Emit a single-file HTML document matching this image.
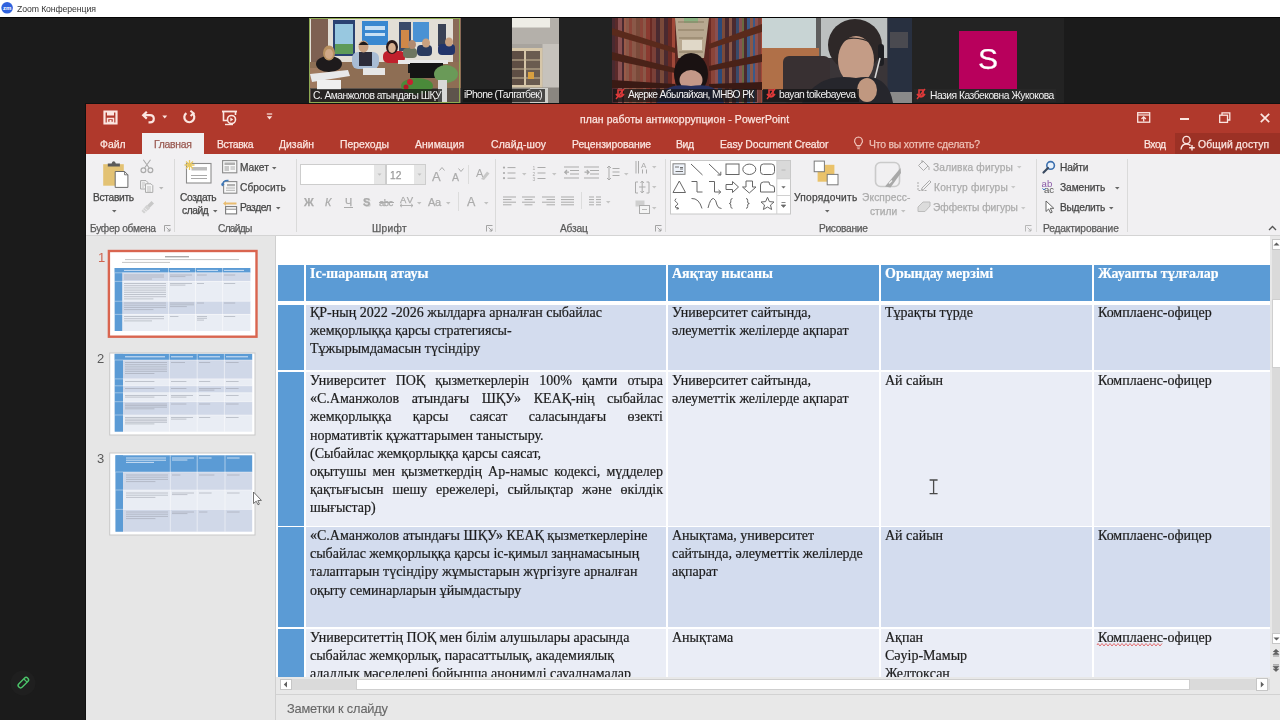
<!DOCTYPE html>
<html><head><meta charset="utf-8">
<style>
*{margin:0;padding:0;box-sizing:border-box}
body{-webkit-font-smoothing:antialiased}
html,body{width:1280px;height:720px;overflow:hidden;background:#1b1b1b;font-family:"Liberation Sans",sans-serif;position:relative}
.a{position:absolute}
svg.a{overflow:visible}
.t{position:absolute;white-space:nowrap;line-height:1;-webkit-text-stroke:0.25px currentColor;will-change:transform}
.c{position:absolute;font-family:"Liberation Serif",serif;font-size:14px;line-height:18.2px;color:#1c1c1c;white-space:nowrap;-webkit-text-stroke:0.2px currentColor;will-change:transform}
.hd{color:#fff;font-weight:bold}
.j{display:block;width:353px;text-align:justify;text-align-last:justify;white-space:normal}
</style></head><body>
<div class="a" style="left:0px;top:0px;width:1280px;height:16.5px;background:#ffffff;"></div>
<div class="a" style="left:0px;top:16.5px;width:1280px;height:1.5px;background:#050505;"></div>
<svg class="a" style="left:1px;top:2px;" width="13" height="13" viewBox="0 0 13 13"><circle cx="6.1" cy="5.8" r="5.8" fill="#2f62de"/><text x="6.1" y="7.9" font-size="6" fill="#fff" text-anchor="middle" font-family="Liberation Sans" font-weight="bold">zm</text></svg>
<div class="t" style="left:16.8px;top:5.24px;font-size:8.7px;color:#333;letter-spacing:-0.093px;-webkit-text-stroke:0;">Zoom Конференция</div>
<svg class="a" style="left:309.5px;top:18px;" width="151" height="85" viewBox="0 0 151 85">
    <rect x="0" y="0" width="151" height="85" fill="#d2ccc2"/>
    <rect x="0" y="0" width="151" height="44" fill="#e2ded6"/>
    <rect x="1" y="0" width="17" height="50" fill="#7e6052"/>
    <rect x="143" y="0" width="8" height="44" fill="#8a6a58"/>
    <rect x="23" y="2" width="22" height="36" fill="#2a4272"/>
    <rect x="25" y="6" width="18" height="20" fill="#98c8e0"/>
    <rect x="25" y="26" width="18" height="10" fill="#5e9a58"/>
    <rect x="52" y="3" width="26" height="24" fill="#3a88d0"/>
    <rect x="55" y="8" width="20" height="4" fill="#c8e0f4"/>
    <rect x="55" y="15" width="20" height="3" fill="#c8e0f4"/>
    <rect x="89" y="4" width="12" height="29" fill="#3a4a6a"/>
    <rect x="91" y="12" width="8" height="18" fill="#d08848"/>
    <rect x="103" y="4" width="16" height="20" fill="#4a92d4"/>
    <rect x="128" y="6" width="8" height="22" fill="#3a4256"/>
    <rect x="0" y="44" width="151" height="28" fill="#8e6e54"/>
    <rect x="0" y="50" width="30" height="22" fill="#a07a60"/>
    <rect x="0" y="70" width="151" height="15" fill="#5e544c"/>
    <ellipse cx="19" cy="46" rx="13" ry="8" fill="#1e1a1c"/>
    <ellipse cx="19" cy="35" rx="6" ry="7.5" fill="#b89060"/>
    <ellipse cx="19" cy="36" rx="4" ry="5" fill="#d0a888"/>
    <rect x="42" y="34" width="27" height="17" rx="6" fill="#a8bcd4"/>
    <rect x="49" y="34" width="13" height="14" fill="#2c2c3a"/>
    <ellipse cx="53.5" cy="28.5" rx="5" ry="6" fill="#c8a080"/>
    <path d="M48.5 27 Q53.5 20 58.5 27 Z" fill="#1e1a1a"/>
    <rect x="73" y="33" width="22" height="12" rx="5" fill="#c0202c"/>
    <ellipse cx="82" cy="29" rx="6" ry="7" fill="#2a1a1a"/>
    <ellipse cx="82" cy="30" rx="3.8" ry="5" fill="#d8b090"/>
    <rect x="93" y="30" width="14" height="10" rx="4" fill="#6e7660"/>
    <ellipse cx="102" cy="26.5" rx="4" ry="4.5" fill="#b08a70"/>
    <rect x="107" y="27" width="15" height="11" rx="4" fill="#2a3a5e"/>
    <ellipse cx="116" cy="25" rx="4" ry="4.5" fill="#c8a080"/>
    <rect x="128" y="26" width="17" height="11" rx="4" fill="#22346a"/>
    <ellipse cx="139" cy="24" rx="4" ry="4.5" fill="#c8a080"/>
    <path d="M0 56 L38 52 L40 58 L2 64 Z" fill="#e8e8ea"/>
    <rect x="7" y="62" width="24" height="10" fill="#f0f0f0"/>
    <rect x="53" y="50" width="22" height="7" fill="#e6e6e6"/>
    <rect x="88" y="42" width="50" height="4" fill="#e8e8e8"/>
    <rect x="98" y="46" width="10" height="9" fill="#1a1a1a"/>
    <rect x="100" y="45" width="33" height="15" fill="#141414"/>
    <ellipse cx="107" cy="68" rx="16" ry="8" fill="#4a8a3a"/>
    <circle cx="100" cy="64" r="3" fill="#c82030"/>
    <circle cx="96" cy="69" r="2.5" fill="#b01828"/>
    <ellipse cx="136" cy="56" rx="12" ry="9" fill="#6a9a58"/>
    <rect x="128" y="62" width="9" height="23" fill="#d8d8d8"/>
    </svg>
<div class="a" style="left:309px;top:17.8px;width:151px;height:85px;background:transparent;border:1.3px solid #8eaa52;"></div>
<div class="a" style="left:311px;top:88.5px;width:131px;height:13.5px;background:rgba(20,20,20,0.72);"></div>
<div class="t" style="left:312.5px;top:90.58px;font-size:10.3px;color:#f2f2f2;letter-spacing:-0.569px;-webkit-text-stroke:0;">С. Аманжолов атындағы ШҚУ</div>
<div class="a" style="left:461px;top:18px;width:151px;height:85px;background:#222222;"></div>
<svg class="a" style="left:512px;top:18px;" width="47" height="85" viewBox="0 0 47 85">
    <rect x="0" y="0" width="47" height="85" fill="#a8a49e"/>
    <rect x="0" y="0" width="47" height="26" fill="#b4b0aa"/>
    <rect x="0" y="0" width="38" height="9.5" fill="#eeede6"/>
    <rect x="30.5" y="26" width="16.5" height="59" fill="#c6c2bc"/>
    <rect x="0" y="30" width="30.5" height="40" fill="#d6c6a8"/>
    <rect x="0" y="33" width="12" height="34" fill="#5e4e44"/>
    <rect x="14" y="33" width="14" height="34" fill="#6a5c50"/>
    <path d="M0 42 H28 M0 51 H28 M0 60 H28" stroke="#c8b898" stroke-width="1"/>
    <rect x="16" y="54" width="6" height="7" fill="#d8a040"/>
    <rect x="0" y="69.5" width="47" height="15.5" fill="#8a8680"/>
    <rect x="18" y="70" width="18" height="15" fill="#d0d0cc"/>
    </svg>
<div class="a" style="left:462.5px;top:88.5px;width:82.5px;height:13.5px;background:rgba(20,20,20,0.72);"></div>
<div class="t" style="left:463.8px;top:90.48px;font-size:10.3px;color:#f2f2f2;letter-spacing:-0.614px;-webkit-text-stroke:0;">iPhone (Талгатбек)</div>
<svg class="a" style="left:612px;top:18px;" width="150" height="85" viewBox="0 0 150 85">
    <rect x="0" y="0" width="150" height="85" fill="#5a2620"/>
    <rect x="0" y="0" width="3" height="85" fill="#4a2a30"/><rect x="3" y="0" width="3" height="85" fill="#5a2a2a"/><rect x="6" y="0" width="4" height="85" fill="#8a5050"/><rect x="10" y="0" width="2" height="85" fill="#4a2a30"/><rect x="12" y="0" width="2" height="85" fill="#9a5a48"/><rect x="14" y="0" width="3" height="85" fill="#8a5848"/><rect x="17" y="0" width="3" height="85" fill="#8a4438"/><rect x="20" y="0" width="4" height="85" fill="#8a5848"/><rect x="24" y="0" width="4" height="85" fill="#7a4a3a"/><rect x="28" y="0" width="3" height="85" fill="#8a4438"/><rect x="31" y="0" width="3" height="85" fill="#8a5848"/><rect x="34" y="0" width="4" height="85" fill="#8a3a30"/><rect x="38" y="0" width="2" height="85" fill="#6a2a24"/><rect x="40" y="0" width="2" height="85" fill="#7a4038"/><rect x="42" y="0" width="2" height="85" fill="#7a4038"/><rect x="44" y="0" width="4" height="85" fill="#4a2a30"/><rect x="48" y="0" width="4" height="85" fill="#7a4a3a"/><rect x="52" y="0" width="4" height="85" fill="#4a2a30"/><rect x="56" y="0" width="4" height="85" fill="#6a2a24"/><rect x="60" y="0" width="3" height="85" fill="#a04838"/><rect x="97" y="0" width="2" height="85" fill="#6a2a24"/><rect x="99" y="0" width="4" height="85" fill="#8a4438"/><rect x="103" y="0" width="3" height="85" fill="#8a5050"/><rect x="106" y="0" width="4" height="85" fill="#2a4a7a"/><rect x="110" y="0" width="3" height="85" fill="#7a4a3a"/><rect x="113" y="0" width="4" height="85" fill="#4a2a30"/><rect x="117" y="0" width="3" height="85" fill="#8a5848"/><rect x="120" y="0" width="4" height="85" fill="#4a2a30"/><rect x="124" y="0" width="3" height="85" fill="#3a4a6a"/><rect x="127" y="0" width="3" height="85" fill="#8a5050"/><rect x="130" y="0" width="2" height="85" fill="#6a6a40"/><rect x="132" y="0" width="3" height="85" fill="#4a2a30"/><rect x="135" y="0" width="3" height="85" fill="#3a5a8a"/><rect x="138" y="0" width="3" height="85" fill="#8a5848"/><rect x="141" y="0" width="2" height="85" fill="#3a5a8a"/><rect x="143" y="0" width="3" height="85" fill="#8a5050"/><rect x="146" y="0" width="3" height="85" fill="#7a4038"/><rect x="149" y="0" width="2" height="85" fill="#a04838"/>
    <polygon points="63,0 97,0 92,40 66,40" fill="#b8a890"/>
    <rect x="72" y="0" width="14" height="5" fill="#8ab080"/>
    <rect x="70" y="22" width="20" height="10" fill="#e0d8c8"/>
    <path d="M66 4 L92 4 M66 12 L92 12 M67 20 H91 M67 34 H91" stroke="#8a7a60" stroke-width="1"/>
    <polygon points="0,10 63,30 63,35 0,17" fill="#5a2a1c"/>
    <polygon points="0,34 63,50 63,55 0,42" fill="#4a2218"/>
    <polygon points="0,62 63,66 63,70 0,70" fill="#3a1a14"/>
    <polygon points="150,6 97,26 97,31 150,14" fill="#5a2a1c"/>
    <polygon points="150,36 97,48 97,53 150,44" fill="#4a2218"/>
    <polygon points="150,64 97,66 97,70 150,72" fill="#3a1a14"/>
    <ellipse cx="79" cy="56" rx="17" ry="21" fill="#1a1212"/>
    <ellipse cx="79" cy="62" rx="11.5" ry="10" fill="#c49888"/>
    <path d="M45 85 Q50 64 79 68 Q108 64 112 85 Z" fill="#27305e"/>
    </svg>
<div class="a" style="left:612.5px;top:88.5px;width:144.5px;height:13.5px;background:rgba(20,20,20,0.72);"></div>
<svg class="a" style="left:615px;top:89px;" width="10" height="11" viewBox="0 0 10 11"><path d="M3 1 L7 1 L7 7 L3 7 Z M1 5 Q5 11 9 5" fill="none" stroke="#e03a3a" stroke-width="1.6"/><path d="M1 10 L9 0" stroke="#e03a3a" stroke-width="1.4"/></svg>
<div class="t" style="left:628px;top:90.48px;font-size:10.3px;color:#f2f2f2;letter-spacing:-0.657px;-webkit-text-stroke:0;">Ақерке Абылайхан, МНВО РК</div>
<svg class="a" style="left:762px;top:18px;" width="150" height="85" viewBox="0 0 150 85">
    <rect x="0" y="0" width="150" height="85" fill="#3a3538"/>
    <rect x="0" y="0" width="54" height="30" fill="#c8d4d4"/>
    <rect x="54" y="0" width="5" height="40" fill="#5e5e5e"/>
    <rect x="59" y="0" width="66.5" height="40" fill="#bcc0c0"/>
    <rect x="125.5" y="0" width="24.5" height="85" fill="#283040"/>
    <rect x="128" y="14" width="18" height="16" fill="#4a4a50"/>
    <rect x="128" y="74" width="22" height="11" fill="#8a8a8a"/>
    <rect x="0" y="30" width="57" height="42" fill="#b07048"/>
    <rect x="21" y="38" width="47" height="47" rx="6" fill="#383032"/>
    <ellipse cx="93" cy="27" rx="27" ry="26" fill="#2e2828"/><rect x="116" y="26" width="6" height="22" rx="3" fill="#1e1e22"/><path d="M118 40 L113 60" stroke="#d8d8d8" stroke-width="1.5"/>
    <ellipse cx="94" cy="42" rx="18" ry="24" fill="#c49c86"/><path d="M76 30 Q84 14 112 26 Q100 18 84 20 Z" fill="#2e2828"/>
    <path d="M40 85 Q55 54 94 60 Q126 54 131 85 Z" fill="#26262c"/>
    <ellipse cx="105" cy="72" rx="10" ry="12" fill="#c09880"/>
    </svg>
<div class="a" style="left:762.5px;top:88.5px;width:96px;height:13.5px;background:rgba(20,20,20,0.72);"></div>
<svg class="a" style="left:766px;top:89px;" width="10" height="11" viewBox="0 0 10 11"><path d="M3 1 L7 1 L7 7 L3 7 Z M1 5 Q5 11 9 5" fill="none" stroke="#e03a3a" stroke-width="1.6"/><path d="M1 10 L9 0" stroke="#e03a3a" stroke-width="1.4"/></svg>
<div class="t" style="left:778.8px;top:90.48px;font-size:10.3px;color:#f2f2f2;letter-spacing:-0.556px;-webkit-text-stroke:0;">bayan toikebayeva</div>
<div class="a" style="left:912px;top:18px;width:152px;height:85px;background:#232323;"></div>
<div class="a" style="left:959px;top:31px;width:58px;height:58px;background:#b8005c;"></div>
<div class="t" style="left:959px;top:44px;width:58px;text-align:center;font-size:30px;color:#fff">S</div>
<div class="a" style="left:913.8px;top:89px;width:142.5px;height:13px;background:rgba(40,40,40,0.8);"></div>
<svg class="a" style="left:916px;top:89px;" width="10" height="11" viewBox="0 0 10 11"><path d="M3 1 L7 1 L7 7 L3 7 Z M1 5 Q5 11 9 5" fill="none" stroke="#e03a3a" stroke-width="1.6"/><path d="M1 10 L9 0" stroke="#e03a3a" stroke-width="1.4"/></svg>
<div class="t" style="left:929.5px;top:90.68px;font-size:10.3px;color:#f2f2f2;letter-spacing:-0.493px;-webkit-text-stroke:0;">Назия Казбековна Жукокова</div>
<div class="a" style="left:85px;top:103px;width:1195px;height:617px;background:#111;"></div>
<div class="a" style="left:86px;top:104px;width:1194px;height:616px;background:#e8e8e8;"></div>
<div class="a" style="left:86px;top:104px;width:1194px;height:50px;background:#b0392c;"></div>
<svg class="a" style="left:103px;top:110px;" width="15" height="15" viewBox="0 0 15 15"><path d="M1.5 1.5 H13.5 V13.5 H1.5 Z" fill="none" stroke="#fbe6e1" stroke-width="2.2"/><rect x="4" y="1" width="7" height="4.5" fill="#fbe6e1"/><rect x="4.5" y="8.5" width="6" height="4" fill="none" stroke="#fbe6e1" stroke-width="1.5"/><rect x="6.5" y="10" width="2" height="3" fill="#fbe6e1"/></svg>
<svg class="a" style="left:141px;top:110px;" width="15" height="15" viewBox="0 0 15 15"><path d="M3 5.2 H9 Q12.8 5.2 12.8 8.8 Q12.8 12.4 9 12.4 H7.5" fill="none" stroke="#fbe6e1" stroke-width="2.2"/><path d="M5.8 1.8 L2.2 5.2 L5.8 8.6" fill="none" stroke="#fbe6e1" stroke-width="2.2"/></svg>
<svg class="a" style="left:162px;top:115px;" width="6" height="4" viewBox="0 0 6 4"><path d="M0.3 0.5 L5.2 0.5 L2.75 3.4 Z" fill="#fbe6e1"/></svg>
<svg class="a" style="left:182px;top:110px;" width="15" height="15" viewBox="0 0 15 15"><path d="M10.2 3.2 A5 5 0 1 1 4.4 3.2" fill="none" stroke="#fbe6e1" stroke-width="2.2"/><path d="M8.4 0.8 L11.6 3.3 L8.6 6" fill="none" stroke="#fbe6e1" stroke-width="2"/></svg>
<svg class="a" style="left:221px;top:110px;" width="17" height="16" viewBox="0 0 17 16"><path d="M1 1.5 H16" stroke="#fbe6e1" stroke-width="1.8"/><path d="M2.5 2 V10.5 H6" fill="none" stroke="#fbe6e1" stroke-width="1.6"/><path d="M14.5 2 V5" stroke="#fbe6e1" stroke-width="1.6"/><circle cx="10.5" cy="9.5" r="4" fill="none" stroke="#fbe6e1" stroke-width="1.6"/><path d="M9.3 7.5 L12.3 9.5 L9.3 11.5 Z" fill="#fbe6e1"/><path d="M4 14.5 H12" stroke="#fbe6e1" stroke-width="1.4"/></svg>
<svg class="a" style="left:266px;top:113px;" width="7" height="8" viewBox="0 0 7 8"><path d="M0.8 1 H6.2" stroke="#fbe6e1" stroke-width="1.2"/><path d="M0.8 3.2 L6.2 3.2 L3.5 6.4 Z" fill="#fbe6e1"/></svg>
<div class="t" style="left:579.8px;top:115.20px;font-size:10.4px;color:#fbe6e1;letter-spacing:0.114px;">план работы антикоррупцион - PowerPoint</div>
<svg class="a" style="left:1137px;top:112px;" width="14" height="11" viewBox="0 0 14 11"><rect x="0.7" y="0.7" width="12" height="9.5" fill="none" stroke="#fbe6e1" stroke-width="1.3"/><path d="M0.7 3 H12.7" stroke="#fbe6e1" stroke-width="1.2"/><path d="M6.7 9.5 V5 M4.5 7 L6.7 4.8 L8.9 7" fill="none" stroke="#fbe6e1" stroke-width="1.3"/></svg>
<div class="a" style="left:1179.5px;top:118.3px;width:9px;height:1.6px;background:#fbe6e1;"></div>
<svg class="a" style="left:1219px;top:112px;" width="12" height="11" viewBox="0 0 12 11"><rect x="0.7" y="3.2" width="7.8" height="7.2" fill="none" stroke="#fbe6e1" stroke-width="1.3"/><path d="M3 3 V0.8 H10.8 V8 H8.6" fill="none" stroke="#fbe6e1" stroke-width="1.3"/></svg>
<svg class="a" style="left:1260px;top:113px;" width="10" height="10" viewBox="0 0 10 10"><path d="M0.8 0.8 L9.2 9.2 M9.2 0.8 L0.8 9.2" stroke="#fbe6e1" stroke-width="1.7"/></svg>
<div class="a" style="left:141.75px;top:133.4px;width:62.5px;height:21px;background:#f1f0f2;"></div>
<div class="t" style="left:99.6px;top:140.10px;font-size:10.4px;color:#fbe6e1;letter-spacing:0.010px;">Файл</div>
<div class="t" style="left:153.6px;top:140.10px;font-size:10.4px;color:#9a5a52;letter-spacing:-0.281px;">Главная</div>
<div class="t" style="left:217.3px;top:140.10px;font-size:10.4px;color:#fbe6e1;letter-spacing:-0.343px;">Вставка</div>
<div class="t" style="left:279.3px;top:140.10px;font-size:10.4px;color:#fbe6e1;letter-spacing:0.008px;">Дизайн</div>
<div class="t" style="left:340.3px;top:140.10px;font-size:10.4px;color:#fbe6e1;letter-spacing:0.031px;">Переходы</div>
<div class="t" style="left:415px;top:140.10px;font-size:10.4px;color:#fbe6e1;letter-spacing:0.054px;">Анимация</div>
<div class="t" style="left:490.5px;top:140.10px;font-size:10.4px;color:#fbe6e1;letter-spacing:0.136px;">Слайд-шоу</div>
<div class="t" style="left:571.5px;top:140.10px;font-size:10.4px;color:#fbe6e1;letter-spacing:-0.085px;">Рецензирование</div>
<div class="t" style="left:676.3px;top:140.10px;font-size:10.4px;color:#fbe6e1;letter-spacing:-0.408px;">Вид</div>
<div class="t" style="left:719.5px;top:140.10px;font-size:10.4px;color:#fbe6e1;letter-spacing:-0.124px;">Easy Document Creator</div>
<svg class="a" style="left:853px;top:136px;" width="11" height="14" viewBox="0 0 11 14"><path d="M5.5 1 A4 4 0 0 1 8.3 7.8 L7.5 9.5 H3.5 L2.7 7.8 A4 4 0 0 1 5.5 1 Z" fill="none" stroke="#efc2b8" stroke-width="1.2"/><path d="M3.8 11 H7.2 M4.3 12.8 H6.7" stroke="#efc2b8" stroke-width="1.1"/></svg>
<div class="t" style="left:868.8px;top:140.10px;font-size:10.4px;color:#edc0b6;letter-spacing:-0.180px;">Что вы хотите сделать?</div>
<div class="t" style="left:1143.8px;top:140.10px;font-size:10.4px;color:#fbe6e1;letter-spacing:-0.443px;">Вход</div>
<div class="a" style="left:1175px;top:133.4px;width:105px;height:20.6px;background:#9c3125;"></div>
<svg class="a" style="left:1180px;top:135px;" width="15" height="16" viewBox="0 0 15 16"><circle cx="6.5" cy="5" r="3.6" fill="none" stroke="#fbe6e1" stroke-width="1.4"/><path d="M1 14.5 Q1.5 9 6.5 9 Q9 9 10.5 10.5" fill="none" stroke="#fbe6e1" stroke-width="1.4"/><path d="M12 10 V15.5 M9.2 12.8 H14.8" stroke="#fbe6e1" stroke-width="1.4"/></svg>
<div class="t" style="left:1197.5px;top:140.10px;font-size:10.4px;color:#fbe6e1;letter-spacing:0.130px;">Общий доступ</div>
<div class="a" style="left:86px;top:154px;width:1194px;height:82px;background:#f1f0f2;"></div>
<div class="a" style="left:86px;top:235px;width:1194px;height:1px;background:#d4d4d4;"></div>
<div class="a" style="left:173.5px;top:159px;width:1px;height:73px;background:#dadada;"></div>
<div class="a" style="left:295.5px;top:159px;width:1px;height:73px;background:#dadada;"></div>
<div class="a" style="left:495.3px;top:159px;width:1px;height:73px;background:#dadada;"></div>
<div class="a" style="left:665.2px;top:159px;width:1px;height:73px;background:#dadada;"></div>
<div class="a" style="left:1035.6px;top:159px;width:1px;height:73px;background:#dadada;"></div>
<div class="a" style="left:1126.7px;top:159px;width:1px;height:73px;background:#dadada;"></div>
<svg class="a" style="left:102px;top:160px;" width="28" height="29" viewBox="0 0 28 29"><rect x="1.2" y="4.2" width="20.6" height="21.5" fill="#e3c274"/>
      <path d="M5.8 6.5 V3.6 H9.6 Q10.2 1.2 11.7 1.2 Q13.2 1.2 13.8 3.6 H17.9 V6.5 Z" fill="#5a5a5a"/>
      <path d="M13.2 11.5 H22.6 L25.9 14.8 V27.4 H13.2 Z" fill="#fff" stroke="#6a6a6a" stroke-width="1"/>
      <path d="M22.6 11.5 V14.8 H25.9" fill="none" stroke="#6a6a6a" stroke-width="0.9"/></svg>
<div class="t" style="left:93.2px;top:192.67px;font-size:10.2px;color:#454545;letter-spacing:-0.305px;">Вставить</div>
<svg class="a" style="left:112px;top:210px;" width="5" height="3" viewBox="0 0 5 3"><path d="M0 0 H4.5 L2.25 2.6 Z" fill="#666"/></svg>
<svg class="a" style="left:140px;top:159px;" width="14" height="15" viewBox="0 0 14 15"><circle cx="3.4" cy="11.2" r="2.4" fill="none" stroke="#ababab" stroke-width="1.2"/><circle cx="10.4" cy="11.2" r="2.4" fill="none" stroke="#ababab" stroke-width="1.2"/><path d="M4.6 9 L10.5 0.8 M9.2 9 L3.3 0.8" stroke="#ababab" stroke-width="1.1"/></svg>
<svg class="a" style="left:140px;top:180px;" width="14" height="13" viewBox="0 0 14 13"><path d="M0.6 0.6 H6 L7.8 2.4 V9 H0.6 Z" fill="#f3f3f3" stroke="#ababab" stroke-width="1"/><path d="M5.5 3.8 H11 L12.8 5.6 V12.4 H5.5 Z" fill="#f5f5f5" stroke="#ababab" stroke-width="1"/><path d="M2 3 H5 M2 5 H5 M2 7 H4 M7 7 H11 M7 9 H11 M7 11 H11" stroke="#ababab" stroke-width="0.7"/></svg>
<svg class="a" style="left:159px;top:187px;" width="5" height="3" viewBox="0 0 5 3"><path d="M0 0 H4.5 L2.25 2.6 Z" fill="#b8b8b8"/></svg>
<svg class="a" style="left:140px;top:200px;" width="15" height="14" viewBox="0 0 15 14"><path d="M7 5.5 L11.5 1 L14 3.5 L9.5 8 Z" fill="#c8c8c8"/><path d="M1.5 11 L6.5 5 L10 8.5 L4 13.5 Z" fill="#d2d2d2"/><path d="M3 9.5 L6 12 M4.5 8 L7.5 10.5" stroke="#f1f0f2" stroke-width="0.8"/></svg>
<div class="t" style="left:89.9px;top:223.77px;font-size:10.2px;color:#5a5a5a;letter-spacing:-0.292px;">Буфер обмена</div>
<svg class="a" style="left:164px;top:225px;" width="7" height="7" viewBox="0 0 7 7"><path d="M0.5 6.5 V0.5 H6.5" fill="none" stroke="#9a9a9a" stroke-width="0.9"/><path d="M2.5 2.5 L6 6 M6 3.5 V6 H3.5" fill="none" stroke="#9a9a9a" stroke-width="0.9"/></svg>
<svg class="a" style="left:183px;top:159px;" width="30" height="26" viewBox="0 0 30 26"><rect x="3.5" y="4.5" width="24.5" height="19.5" fill="#fff" stroke="#8c8c8c" stroke-width="1.1"/>
      <rect x="8.5" y="8" width="15.5" height="3.5" fill="#bdbdbd"/>
      <path d="M8 16.5 H24 M8 19.5 H24" stroke="#a0a0a0" stroke-width="0.9"/>
      <g stroke="#e8c860" stroke-width="1.3"><path d="M6.5 1 V11 M1.5 6 H11.5 M3 2.5 L10 9.5 M10 2.5 L3 9.5"/></g></svg>
<div class="t" style="left:180px;top:193.17px;font-size:10.2px;color:#454545;letter-spacing:-0.344px;">Создать</div>
<div class="t" style="left:182.2px;top:206.27px;font-size:10.2px;color:#454545;letter-spacing:-0.419px;">слайд</div>
<svg class="a" style="left:212.8px;top:210px;" width="5" height="3" viewBox="0 0 5 3"><path d="M0 0 H4.5 L2.25 2.6 Z" fill="#666"/></svg>
<svg class="a" style="left:222px;top:160px;" width="16" height="14" viewBox="0 0 16 14"><rect x="0.6" y="0.6" width="14.2" height="12.2" fill="#f8f8f8" stroke="#8a8a8a" stroke-width="1.1"/><rect x="2.5" y="2.5" width="10.5" height="2.5" fill="#b0b0b0"/><rect x="2.5" y="6" width="4.5" height="5" fill="#c8c8c8"/><path d="M8.5 7 H13 M8.5 9 H13" stroke="#9a9a9a" stroke-width="0.8"/></svg>
<div class="t" style="left:239.8px;top:163.17px;font-size:10.2px;color:#454545;letter-spacing:0.008px;">Макет</div>
<svg class="a" style="left:272.2px;top:166.5px;" width="5" height="3" viewBox="0 0 5 3"><path d="M0 0 H4.5 L2.25 2.6 Z" fill="#666"/></svg>
<svg class="a" style="left:221px;top:179px;" width="17" height="15" viewBox="0 0 17 15"><rect x="2.6" y="2.6" width="13.2" height="11.6" fill="#f8f8f8" stroke="#8a8a8a" stroke-width="1.1"/><rect x="6" y="5" width="8" height="2.2" fill="#b0b0b0"/><path d="M5 9 H14 M5 11.3 H14" stroke="#a0a0a0" stroke-width="0.8"/><path d="M1.2 6.5 Q2 1 7.5 1.6" fill="none" stroke="#3f78b8" stroke-width="1.6"/><path d="M0 4.5 L1.3 7.5 L3.6 5" fill="#3f78b8"/></svg>
<div class="t" style="left:239.8px;top:183.17px;font-size:10.2px;color:#454545;letter-spacing:0.066px;">Сбросить</div>
<svg class="a" style="left:223px;top:200px;" width="15" height="15" viewBox="0 0 15 15"><path d="M2 3.5 H13.5" stroke="#e8bc70" stroke-width="2"/><path d="M0 3.5 L3 1 V6 Z" fill="#e8bc70"/><rect x="2.6" y="6.6" width="11" height="7.3" fill="#fff" stroke="#7a7a7a" stroke-width="1.1"/><path d="M2.6 9.2 H13.6" stroke="#7a7a7a" stroke-width="0.9"/></svg>
<div class="t" style="left:239.8px;top:203.17px;font-size:10.2px;color:#454545;letter-spacing:-0.443px;">Раздел</div>
<svg class="a" style="left:275.5px;top:207px;" width="5" height="3" viewBox="0 0 5 3"><path d="M0 0 H4.5 L2.25 2.6 Z" fill="#666"/></svg>
<div class="t" style="left:217.8px;top:223.77px;font-size:10.2px;color:#5a5a5a;letter-spacing:-0.714px;">Слайды</div>
<svg class="a" style="left:300px;top:164px;" width="126" height="21" viewBox="0 0 126 21"><rect x="0.5" y="0.5" width="85" height="20" fill="#fff" stroke="#cdcdcd"/><rect x="74" y="1" width="11" height="19" fill="#e6e6e6"/><path d="M77.5 9.5 H81.5 L79.5 11.8 Z" fill="#c0c0c0"/><rect x="86.5" y="0.5" width="39" height="20" fill="#fff" stroke="#cdcdcd"/><rect x="114" y="1" width="11" height="19" fill="#e6e6e6"/><path d="M117.5 9.5 H121.5 L119.5 11.8 Z" fill="#c0c0c0"/></svg>
<div class="t" style="left:389.5px;top:170.67px;font-size:10.2px;color:#9a9a9a;">12</div>
<div class="t" style="left:431.5px;top:169.50px;font-size:13px;color:#ababab;">A</div>
<svg class="a" style="left:439px;top:167px;" width="6" height="4" viewBox="0 0 6 4"><path d="M0.5 3.5 L3 0.5 L5.5 3.5" fill="none" stroke="#ababab" stroke-width="1"/></svg>
<div class="t" style="left:451.5px;top:171.61px;font-size:10.5px;color:#ababab;">A</div>
<svg class="a" style="left:457.5px;top:168px;" width="6" height="4" viewBox="0 0 6 4"><path d="M0.5 0.5 L3 3.5 L5.5 0.5" fill="none" stroke="#ababab" stroke-width="1"/></svg>
<div class="a" style="left:468.4px;top:165px;width:1px;height:19px;background:#dcdcdc;"></div>
<svg class="a" style="left:476px;top:167px;" width="14" height="14" viewBox="0 0 14 14"><text x="0" y="10" font-size="11" fill="#ababab" font-family="Liberation Sans">A</text><path d="M5 12 L11 4.5 L13.5 6.5 L8 13 Z" fill="#c8c8c8"/></svg>
<div class="t" style="left:304px;top:196.86px;font-size:10.8px;color:#ababab;font-weight:bold;">Ж</div>
<div class="t" style="left:324.6px;top:196.86px;font-size:10.8px;color:#ababab;font-style:italic;">К</div>
<div class="t" style="left:344.5px;top:196.86px;font-size:10.8px;color:#ababab;">Ч</div>
<div class="a" style="left:344px;top:206.8px;width:8.5px;height:1px;background:#ababab;"></div>
<div class="t" style="left:363px;top:196.89px;font-size:11px;color:#ababab;font-weight:bold;text-shadow:1px 1px 0 #d8d8d8;">S</div>
<div class="t" style="left:379px;top:197.66px;font-size:9.5px;color:#ababab;letter-spacing:-0.559px;">abc</div>
<div class="a" style="left:379px;top:201.5px;width:14.5px;height:0.9px;background:#ababab;"></div>
<div class="t" style="left:399.5px;top:195.26px;font-size:9.5px;color:#ababab;letter-spacing:1.031px;">AV</div>
<svg class="a" style="left:399px;top:203px;" width="15" height="5" viewBox="0 0 15 5"><path d="M1 2.5 H14 M1 2.5 L3 0.8 M1 2.5 L3 4.2 M14 2.5 L12 0.8 M14 2.5 L12 4.2" fill="none" stroke="#ababab" stroke-width="0.9"/></svg>
<svg class="a" style="left:417px;top:201.5px;" width="5" height="3" viewBox="0 0 5 3"><path d="M0 0 H4.5 L2.25 2.6 Z" fill="#c0c0c0"/></svg>
<div class="t" style="left:428px;top:196.69px;font-size:11px;color:#ababab;letter-spacing:-0.455px;">Aa</div>
<svg class="a" style="left:446px;top:201.5px;" width="5" height="3" viewBox="0 0 5 3"><path d="M0 0 H4.5 L2.25 2.6 Z" fill="#c0c0c0"/></svg>
<div class="a" style="left:458px;top:192px;width:1px;height:19px;background:#dcdcdc;"></div>
<div class="t" style="left:467.2px;top:195.72px;font-size:12.5px;color:#ababab;">A</div>
<svg class="a" style="left:484px;top:201.5px;" width="5" height="3" viewBox="0 0 5 3"><path d="M0 0 H4.5 L2.25 2.6 Z" fill="#c0c0c0"/></svg>
<div class="t" style="left:372px;top:223.77px;font-size:10.2px;color:#5a5a5a;letter-spacing:0.260px;">Шрифт</div>
<svg class="a" style="left:486px;top:225px;" width="7" height="7" viewBox="0 0 7 7"><path d="M0.5 6.5 V0.5 H6.5" fill="none" stroke="#9a9a9a" stroke-width="0.9"/><path d="M2.5 2.5 L6 6 M6 3.5 V6 H3.5" fill="none" stroke="#9a9a9a" stroke-width="0.9"/></svg>
<svg class="a" style="left:502px;top:165px;" width="15" height="16" viewBox="0 0 15 16"><g fill="#ababab"><circle cx="2" cy="2.6" r="1.1"/><circle cx="2" cy="8" r="1.1"/><circle cx="2" cy="13.2" r="1.1"/></g><path d="M5.5 2.6 H13.5 M5.5 8 H13.5 M5.5 13.2 H13.5" stroke="#ababab" stroke-width="1"/></svg>
<svg class="a" style="left:521.8px;top:172.5px;" width="5" height="3" viewBox="0 0 5 3"><path d="M0 0 H4.5 L2.25 2.6 Z" fill="#c4c4c4"/></svg>
<svg class="a" style="left:532px;top:164px;" width="15" height="17" viewBox="0 0 15 17"><text x="0.5" y="6" font-size="5" fill="#ababab" font-family="Liberation Sans">1</text><text x="0.5" y="11.5" font-size="5" fill="#ababab" font-family="Liberation Sans">2</text><text x="0.5" y="17" font-size="5" fill="#ababab" font-family="Liberation Sans">3</text><path d="M5.5 3.5 H13.5 M5.5 9 H13.5 M5.5 14.5 H13.5" stroke="#ababab" stroke-width="1"/></svg>
<svg class="a" style="left:552px;top:172.5px;" width="5" height="3" viewBox="0 0 5 3"><path d="M0 0 H4.5 L2.25 2.6 Z" fill="#c4c4c4"/></svg>
<svg class="a" style="left:564px;top:166px;" width="16" height="14" viewBox="0 0 16 14"><path d="M0 1 H15 M6 4.5 H15 M6 8 H15 M0 12 H15" stroke="#ababab" stroke-width="1"/><path d="M5 6.2 H0.8 M3 4 L0.8 6.2 L3 8.4" fill="none" stroke="#ababab" stroke-width="1.3"/></svg>
<svg class="a" style="left:583.5px;top:166px;" width="16" height="14" viewBox="0 0 16 14"><path d="M0 1 H15 M6 4.5 H15 M6 8 H15 M0 12 H15" stroke="#ababab" stroke-width="1"/><path d="M0.5 6.2 H4.8 M2.8 4 L5 6.2 L2.8 8.4" fill="none" stroke="#ababab" stroke-width="1.3"/></svg>
<svg class="a" style="left:606px;top:165px;" width="14" height="16" viewBox="0 0 14 16"><path d="M3 1 V15 M1 3 L3 1 L5 3 M1 13 L3 15 L5 13" fill="none" stroke="#ababab" stroke-width="1"/><path d="M6.5 3.5 H13.5 M6.5 7 H13.5 M6.5 10.5 H13.5" stroke="#ababab" stroke-width="1"/></svg>
<svg class="a" style="left:623.8px;top:172.5px;" width="5" height="3" viewBox="0 0 5 3"><path d="M0 0 H4.5 L2.25 2.6 Z" fill="#c4c4c4"/></svg>
<svg class="a" style="left:634.5px;top:159.5px;" width="15" height="15" viewBox="0 0 15 15"><path d="M1 1 V13.5 M3.5 1 V13.5" stroke="#ababab" stroke-width="1"/><text x="6" y="8" font-size="8" fill="#ababab" font-family="Liberation Sans">A</text><path d="M7.5 9.5 V13.5 M11.5 9.5 V13.5" stroke="#ababab" stroke-width="1"/></svg>
<svg class="a" style="left:652.3px;top:166px;" width="5" height="3" viewBox="0 0 5 3"><path d="M0 0 H4.5 L2.25 2.6 Z" fill="#c4c4c4"/></svg>
<svg class="a" style="left:634.5px;top:180px;" width="15" height="14" viewBox="0 0 15 14"><path d="M0.5 2 V13 M14 2 V13 M0.5 2 H3 M0.5 13 H3 M14 2 H11.5 M14 13 H11.5" fill="none" stroke="#ababab" stroke-width="1"/><path d="M7.2 1 V13 M5.5 3 L7.2 1 L9 3 M5.5 11 L7.2 13 L9 11" fill="none" stroke="#ababab" stroke-width="1"/><path d="M4 7 H10.5" stroke="#ababab" stroke-width="1"/></svg>
<svg class="a" style="left:652.3px;top:186px;" width="5" height="3" viewBox="0 0 5 3"><path d="M0 0 H4.5 L2.25 2.6 Z" fill="#c4c4c4"/></svg>
<svg class="a" style="left:634.5px;top:200px;" width="15" height="14" viewBox="0 0 15 14"><rect x="0.5" y="0.5" width="9" height="6" fill="#cfcfcf"/><rect x="4.5" y="5.5" width="10" height="8" fill="#f4f4f4" stroke="#ababab" stroke-width="1"/><path d="M7 9.5 H12" stroke="#ababab" stroke-width="0.8"/></svg>
<svg class="a" style="left:652.3px;top:207px;" width="5" height="3" viewBox="0 0 5 3"><path d="M0 0 H4.5 L2.25 2.6 Z" fill="#c4c4c4"/></svg>
<svg class="a" style="left:503.4px;top:196px;" width="14" height="10" viewBox="0 0 14 10"><path d="M0 1.0 H13 M0 3.6 H8.5 M0 6.2 H13 M0 8.8 H8.5 " stroke="#ababab" stroke-width="1"/></svg>
<svg class="a" style="left:522.4px;top:196px;" width="14" height="10" viewBox="0 0 14 10"><path d="M0 1.0 H13 M2.5 3.6 H10.5 M0 6.2 H13 M2.5 8.8 H10.5 " stroke="#ababab" stroke-width="1"/></svg>
<svg class="a" style="left:542px;top:196px;" width="14" height="10" viewBox="0 0 14 10"><path d="M0 1.0 H13 M4.5 3.6 H13 M0 6.2 H13 M4.5 8.8 H13 " stroke="#ababab" stroke-width="1"/></svg>
<svg class="a" style="left:561px;top:196px;" width="14" height="10" viewBox="0 0 14 10"><path d="M0 1.0 H13 M0 3.6 H13 M0 6.2 H13 M0 8.8 H13 " stroke="#ababab" stroke-width="1"/></svg>
<div class="a" style="left:581px;top:192px;width:1px;height:17px;background:#dcdcdc;"></div>
<svg class="a" style="left:588.5px;top:196px;" width="12" height="10" viewBox="0 0 12 10"><path d="M0 1 H5 M7 1 H12 M0 3.6 H5 M7 3.6 H12 M0 6.2 H5 M7 6.2 H12 M0 8.8 H5 M7 8.8 H12" stroke="#ababab" stroke-width="1"/></svg>
<svg class="a" style="left:605.5px;top:200.5px;" width="5" height="3" viewBox="0 0 5 3"><path d="M0 0 H4.5 L2.25 2.6 Z" fill="#c4c4c4"/></svg>
<div class="t" style="left:560px;top:223.77px;font-size:10.2px;color:#5a5a5a;letter-spacing:-0.203px;">Абзац</div>
<svg class="a" style="left:655.3px;top:225px;" width="7" height="7" viewBox="0 0 7 7"><path d="M0.5 6.5 V0.5 H6.5" fill="none" stroke="#9a9a9a" stroke-width="0.9"/><path d="M2.5 2.5 L6 6 M6 3.5 V6 H3.5" fill="none" stroke="#9a9a9a" stroke-width="0.9"/></svg>
<svg class="a" style="left:670px;top:160px;" width="122" height="56" viewBox="0 0 122 56"><rect x="0.5" y="0.5" width="120" height="53.5" fill="#fff" stroke="#c8c8c8"/>
    <rect x="107" y="1" width="13" height="18" fill="#d9d9d9"/>
    <path d="M107 18.8 H120.5 M107 35.5 H120.5 M106.8 1 V54" stroke="#d0d0d0" stroke-width="1"/>
    <path d="M111.5 10 H115.5" stroke="#b8b8b8" stroke-width="1"/>
    <path d="M111.3 26.2 H115.7 L113.5 28.6 Z" fill="#6a6a6a"/>
    <path d="M111.5 42.5 H115.5 M111.3 45 H115.7 L113.5 47.4 Z" stroke="#6a6a6a" fill="#6a6a6a" stroke-width="0.8"/>
    <g fill="none" stroke="#666" stroke-width="1"><rect x="3" y="3.8" width="12" height="10.5" fill="#eef3fa" stroke="#808080"/><path d="M5 7 H9 M5.5 11.5 H13 M10 7.5 H13 M10 9 H13" stroke="#707070"/><path d="M21 4 L32.5 15"/><path d="M39 4 L50.5 15 M47.5 15 H50.8 V11.7"/><rect x="56" y="4" width="13" height="10.5"/><ellipse cx="79.3" cy="9.3" rx="6.5" ry="5.2"/><rect x="90.5" y="4" width="14" height="10.5" rx="3"/><path d="M3 32.5 L9.3 21 L15.5 32.5 Z"/><path d="M21.5 21.5 H27 V32 H32.5"/><path d="M39 21.5 H44.5 V32 H50.5 M48.5 30 L50.8 32 L48.5 34"/><path d="M56 24.5 H62.5 V21.5 L68.5 27 L62.5 32.5 V29.5 H56 Z"/><path d="M76 21 H82.5 V27 H86 L79.3 33 L72.5 27 H76 Z"/><path d="M90.5 32 V25 Q90.5 22 93.5 22 H99 Q99 25.5 101.5 25.5 Q104.5 25.5 104.5 28 V32 Z"/><path d="M6 38.5 Q3.5 40.5 6.5 42.5 Q9.5 44 5.5 46 Q4 47.5 8.5 48.5 M7.5 47 L8.5 48.8 L6.5 49"/><path d="M21.5 38.5 Q29 38 32 48.5"/><path d="M38 48 Q40.5 38 43.5 38.5 Q46 39.5 47 45 Q48 48.5 51.5 48.5"/><path d="M62.5 38.5 Q60.8 38.5 60.8 40.3 V42 Q60.8 43.5 59.2 43.5 Q60.8 43.5 60.8 45 V46.6 Q60.8 48.3 62.5 48.3"/><path d="M76 38.5 Q77.7 38.5 77.7 40.3 V42 Q77.7 43.5 79.3 43.5 Q77.7 43.5 77.7 45 V46.6 Q77.7 48.3 76 48.3"/><path d="M97.5 37.3 L99.4 41.6 L104 42 L100.5 45 L101.6 49.5 L97.5 47 L93.4 49.5 L94.5 45 L91 42 L95.6 41.6 Z"/></g></svg>
<svg class="a" style="left:813px;top:160px;" width="27" height="27" viewBox="0 0 27 27"><rect x="4.6" y="4.8" width="16.8" height="16.9" fill="#eac26a"/><rect x="1.2" y="1.1" width="10.2" height="10.6" fill="#fff" stroke="#7a7a7a" stroke-width="1"/><rect x="14.2" y="14.4" width="10.8" height="10.4" fill="#fff" stroke="#7a7a7a" stroke-width="1"/></svg>
<div class="t" style="left:794.4px;top:192.87px;font-size:10.2px;color:#454545;letter-spacing:0.270px;">Упорядочить</div>
<svg class="a" style="left:825.3px;top:210.3px;" width="5" height="3" viewBox="0 0 5 3"><path d="M0 0 H4.5 L2.25 2.6 Z" fill="#666"/></svg>
<svg class="a" style="left:874px;top:161px;" width="28" height="28" viewBox="0 0 28 28"><rect x="1.5" y="1.5" width="24" height="24" rx="5" fill="none" stroke="#cacaca" stroke-width="1.6"/><path d="M26.5 7 L11 25.5 L16.5 26.5 L27 12 Z" fill="#a8a8a8"/><path d="M18 19.5 L15 22.5" stroke="#f1f1f1" stroke-width="1.2"/></svg>
<div class="t" style="left:862.2px;top:192.87px;font-size:10.2px;color:#ababab;letter-spacing:0.116px;">Экспресс-</div>
<div class="t" style="left:870px;top:207.07px;font-size:10.2px;color:#ababab;letter-spacing:0.020px;">стили</div>
<svg class="a" style="left:901px;top:210.3px;" width="5" height="3" viewBox="0 0 5 3"><path d="M0 0 H4.5 L2.25 2.6 Z" fill="#c0c0c0"/></svg>
<svg class="a" style="left:917px;top:159px;" width="14" height="13" viewBox="0 0 14 13"><path d="M1.5 6.5 L6 2 L11 7 L6.5 11.5 Z" fill="none" stroke="#ababab" stroke-width="1"/><path d="M5 1 V4 M10 6 Q13 8 12 11" fill="none" stroke="#ababab" stroke-width="1"/></svg>
<div class="t" style="left:933.3px;top:163.17px;font-size:10.2px;color:#ababab;letter-spacing:0.162px;">Заливка фигуры</div>
<svg class="a" style="left:1016.7px;top:166px;" width="5" height="3" viewBox="0 0 5 3"><path d="M0 0 H4.5 L2.25 2.6 Z" fill="#c8c8c8"/></svg>
<svg class="a" style="left:916.5px;top:179px;" width="15" height="13" viewBox="0 0 15 13"><path d="M1 3 V11.5 H10" fill="none" stroke="#ababab" stroke-width="1" stroke-dasharray="2 1"/><path d="M5 9 L12.5 1.5 L14 3 L6.5 10.5 L4.5 11 Z" fill="none" stroke="#ababab" stroke-width="1"/></svg>
<div class="t" style="left:933.9px;top:183.17px;font-size:10.2px;color:#ababab;letter-spacing:0.215px;">Контур фигуры</div>
<svg class="a" style="left:1011px;top:186px;" width="5" height="3" viewBox="0 0 5 3"><path d="M0 0 H4.5 L2.25 2.6 Z" fill="#c8c8c8"/></svg>
<svg class="a" style="left:916.5px;top:201px;" width="14" height="12" viewBox="0 0 14 12"><path d="M1 6 L6 1 H13 V5 L8 10.5 H1 Z" fill="#dcdcdc" stroke="#bcbcbc" stroke-width="1"/></svg>
<div class="t" style="left:933.3px;top:202.67px;font-size:10.2px;color:#ababab;letter-spacing:-0.000px;">Эффекты фигуры</div>
<svg class="a" style="left:1021px;top:206.5px;" width="5" height="3" viewBox="0 0 5 3"><path d="M0 0 H4.5 L2.25 2.6 Z" fill="#c8c8c8"/></svg>
<div class="t" style="left:818.9px;top:223.77px;font-size:10.2px;color:#5a5a5a;letter-spacing:-0.309px;">Рисование</div>
<svg class="a" style="left:1025px;top:225px;" width="7" height="7" viewBox="0 0 7 7"><path d="M0.5 6.5 V0.5 H6.5" fill="none" stroke="#b0b0b0" stroke-width="0.9"/><path d="M2.5 2.5 L6 6 M6 3.5 V6 H3.5" fill="none" stroke="#b0b0b0" stroke-width="0.9"/></svg>
<svg class="a" style="left:1042px;top:160px;" width="14" height="14" viewBox="0 0 14 14"><circle cx="8.6" cy="5.4" r="3.8" fill="#eaf2fb" stroke="#3c6fae" stroke-width="1.6"/><path d="M6 8 L1.5 12.5" stroke="#3a4a60" stroke-width="2.2" stroke-linecap="round"/></svg>
<div class="t" style="left:1059.7px;top:163.17px;font-size:10.2px;color:#454545;letter-spacing:-0.127px;">Найти</div>
<svg class="a" style="left:1041px;top:179px;" width="17" height="15" viewBox="0 0 17 15"><text x="0.6" y="7.6" font-size="9.6" fill="#8a5aa8" font-family="Liberation Sans">ab</text><text x="3" y="13.8" font-size="9.6" fill="#555" font-family="Liberation Sans">ac</text><path d="M1.5 9.3 L3 11 L4.5 9.3" fill="none" stroke="#3a78c0" stroke-width="1"/></svg>
<div class="t" style="left:1059.7px;top:183.17px;font-size:10.2px;color:#454545;letter-spacing:-0.077px;">Заменить</div>
<svg class="a" style="left:1114.8px;top:186.6px;" width="5" height="3" viewBox="0 0 5 3"><path d="M0 0 H4.5 L2.25 2.6 Z" fill="#666"/></svg>
<svg class="a" style="left:1045px;top:200px;" width="10" height="14" viewBox="0 0 10 14"><path d="M1 1 V11.5 L3.6 9 L5.6 13 L7.2 12.2 L5.3 8.3 L8.8 8.3 Z" fill="#fff" stroke="#555" stroke-width="0.9"/></svg>
<div class="t" style="left:1059.7px;top:203.17px;font-size:10.2px;color:#454545;letter-spacing:-0.251px;">Выделить</div>
<svg class="a" style="left:1108.8px;top:206.6px;" width="5" height="3" viewBox="0 0 5 3"><path d="M0 0 H4.5 L2.25 2.6 Z" fill="#666"/></svg>
<div class="t" style="left:1043px;top:223.77px;font-size:10.2px;color:#5a5a5a;letter-spacing:-0.139px;">Редактирование</div>
<svg class="a" style="left:1268px;top:225px;" width="9" height="6" viewBox="0 0 9 6"><path d="M1 5 L4.5 1.5 L8 5" fill="none" stroke="#555" stroke-width="1.3"/></svg>
<div class="a" style="left:86px;top:236px;width:190px;height:484px;background:#e6e6e6;"></div>
<div class="a" style="left:275.3px;top:236px;width:1px;height:484px;background:#cfcfcf;"></div>
<div class="t" style="left:97.6px;top:251.10px;font-size:13px;color:#cf6450;-webkit-text-stroke:0;">1</div>
<div class="t" style="left:97.2px;top:351.90px;font-size:13px;color:#5a5a5a;-webkit-text-stroke:0;">2</div>
<div class="t" style="left:97.2px;top:451.90px;font-size:13px;color:#5a5a5a;-webkit-text-stroke:0;">3</div>
<svg class="a" style="left:0px;top:0px;" width="300" height="720" viewBox="0 0 300 720"><rect x="110" y="252" width="146" height="84" fill="#fff"/><path d="M165 256.8 H189" stroke="#777" stroke-width="0.9"/><path d="M125 259.6 H239 M122 262.4 H170" stroke="#aaa" stroke-width="0.7"/><rect x="114.7" y="268" width="135.7" height="4.8" fill="#5b9bd5"/><rect x="114.7" y="272.8" width="135.7" height="8.599999999999966" fill="#d0d8e8"/><rect x="114.7" y="281.4" width="135.7" height="19.850000000000023" fill="#e9edf4"/><rect x="114.7" y="301.25" width="135.7" height="13.149999999999977" fill="#d0d8e8"/><rect x="114.7" y="314.4" width="135.7" height="16.600000000000023" fill="#e9edf4"/><rect x="114.7" y="268" width="7.5" height="63" fill="#5b9bd5"/><path d="M168.5 268 V331" stroke="#fff" stroke-width="0.5"/><path d="M195.5 268 V331" stroke="#fff" stroke-width="0.5"/><path d="M222.6 268 V331" stroke="#fff" stroke-width="0.5"/><path d="M114.7 272.8 H250.4" stroke="#fff" stroke-width="0.4"/><path d="M114.7 281.4 H250.4" stroke="#fff" stroke-width="0.4"/><path d="M114.7 301.25 H250.4" stroke="#fff" stroke-width="0.4"/><path d="M114.7 314.4 H250.4" stroke="#fff" stroke-width="0.4"/><path d="M124 270.4 H160 M170 270.4 H190 M197 270.4 H218 M224 270.4 H244" stroke="#e8f0fa" stroke-width="0.8"/><path d="M124 275.00 H164.00" stroke="#9aa0aa" stroke-width="0.55"/><path d="M124 277.00 H164.00" stroke="#9aa0aa" stroke-width="0.55"/><path d="M124 279.00 H152.00" stroke="#9aa0aa" stroke-width="0.55"/><path d="M170 275.00 H192.00" stroke="#9aa0aa" stroke-width="0.55"/><path d="M170 276.60 H185.40" stroke="#9aa0aa" stroke-width="0.55"/><path d="M197 275.00 H206.80" stroke="#9aa0aa" stroke-width="0.55"/><path d="M224 275.00 H235.20" stroke="#9aa0aa" stroke-width="0.55"/><path d="M124 283.50 H166.00" stroke="#9aa0aa" stroke-width="0.55"/><path d="M124 285.70 H166.00" stroke="#9aa0aa" stroke-width="0.55"/><path d="M124 287.90 H166.00" stroke="#9aa0aa" stroke-width="0.55"/><path d="M124 290.10 H166.00" stroke="#9aa0aa" stroke-width="0.55"/><path d="M124 292.30 H166.00" stroke="#9aa0aa" stroke-width="0.55"/><path d="M124 294.50 H166.00" stroke="#9aa0aa" stroke-width="0.55"/><path d="M124 296.70 H166.00" stroke="#9aa0aa" stroke-width="0.55"/><path d="M124 298.90 H153.40" stroke="#9aa0aa" stroke-width="0.55"/><path d="M170 283.50 H192.00" stroke="#9aa0aa" stroke-width="0.55"/><path d="M170 285.10 H185.40" stroke="#9aa0aa" stroke-width="0.55"/><path d="M197 283.50 H204.00" stroke="#9aa0aa" stroke-width="0.55"/><path d="M224 283.50 H235.20" stroke="#9aa0aa" stroke-width="0.55"/><path d="M124 303.00 H166.00" stroke="#9aa0aa" stroke-width="0.55"/><path d="M124 305.20 H166.00" stroke="#9aa0aa" stroke-width="0.55"/><path d="M124 307.40 H166.00" stroke="#9aa0aa" stroke-width="0.55"/><path d="M124 309.60 H153.40" stroke="#9aa0aa" stroke-width="0.55"/><path d="M170 303.00 H194.00" stroke="#9aa0aa" stroke-width="0.55"/><path d="M170 304.80 H194.00" stroke="#9aa0aa" stroke-width="0.55"/><path d="M170 306.60 H186.80" stroke="#9aa0aa" stroke-width="0.55"/><path d="M197 303.00 H204.00" stroke="#9aa0aa" stroke-width="0.55"/><path d="M224 303.00 H235.20" stroke="#9aa0aa" stroke-width="0.55"/><path d="M124 316.50 H164.00" stroke="#9aa0aa" stroke-width="0.55"/><path d="M124 318.70 H164.00" stroke="#9aa0aa" stroke-width="0.55"/><path d="M124 320.90 H152.00" stroke="#9aa0aa" stroke-width="0.55"/><path d="M170 316.50 H178.40" stroke="#9aa0aa" stroke-width="0.55"/><path d="M197 316.50 H207.00" stroke="#9aa0aa" stroke-width="0.55"/><path d="M197 318.30 H207.00" stroke="#9aa0aa" stroke-width="0.55"/><path d="M197 320.10 H204.00" stroke="#9aa0aa" stroke-width="0.55"/><path d="M224 316.50 H235.20" stroke="#9aa0aa" stroke-width="0.55"/><rect x="108.9" y="251" width="147.6" height="85.7" fill="none" stroke="#d9654f" stroke-width="2.4"/></svg>
<svg class="a" style="left:0px;top:0px;" width="300" height="720" viewBox="0 0 300 720"><rect x="109.7" y="353" width="145.3" height="82" fill="#fff" stroke="#c8c8c8" stroke-width="1"/><rect x="114.7" y="353.9" width="137.5" height="6.1" fill="#5b9bd5"/><rect x="114.7" y="360" width="137.5" height="18.899999999999977" fill="#d0d8e8"/><rect x="114.7" y="378.9" width="137.5" height="6.900000000000034" fill="#e9edf4"/><rect x="114.7" y="385.8" width="137.5" height="7.0" fill="#d0d8e8"/><rect x="114.7" y="392.8" width="137.5" height="8.899999999999977" fill="#e9edf4"/><rect x="114.7" y="401.7" width="137.5" height="13.300000000000011" fill="#d0d8e8"/><rect x="114.7" y="415" width="137.5" height="16.69999999999999" fill="#e9edf4"/><rect x="114.7" y="353.9" width="8.3" height="77.80000000000001" fill="#5b9bd5"/><path d="M169.4 353.9 V431.7" stroke="#fff" stroke-width="0.5"/><path d="M197.2 353.9 V431.7" stroke="#fff" stroke-width="0.5"/><path d="M224.4 353.9 V431.7" stroke="#fff" stroke-width="0.5"/><path d="M114.7 360 H252.2" stroke="#fff" stroke-width="0.4"/><path d="M114.7 378.9 H252.2" stroke="#fff" stroke-width="0.4"/><path d="M114.7 385.8 H252.2" stroke="#fff" stroke-width="0.4"/><path d="M114.7 392.8 H252.2" stroke="#fff" stroke-width="0.4"/><path d="M114.7 401.7 H252.2" stroke="#fff" stroke-width="0.4"/><path d="M114.7 415 H252.2" stroke="#fff" stroke-width="0.4"/><path d="M125 356.8 H165 M171 356.8 H193 M199 356.8 H220 M226 356.8 H248" stroke="#e8f0fa" stroke-width="0.9"/><path d="M125 362.50 H167.00" stroke="#9aa0aa" stroke-width="0.55"/><path d="M125 364.70 H167.00" stroke="#9aa0aa" stroke-width="0.55"/><path d="M125 366.90 H167.00" stroke="#9aa0aa" stroke-width="0.55"/><path d="M125 369.10 H167.00" stroke="#9aa0aa" stroke-width="0.55"/><path d="M125 371.30 H167.00" stroke="#9aa0aa" stroke-width="0.55"/><path d="M125 373.50 H154.40" stroke="#9aa0aa" stroke-width="0.55"/><path d="M171 362.50 H185.00" stroke="#9aa0aa" stroke-width="0.55"/><path d="M199 362.50 H210.20" stroke="#9aa0aa" stroke-width="0.55"/><path d="M226 362.50 H238.60" stroke="#9aa0aa" stroke-width="0.55"/><path d="M125 381.50 H154.40" stroke="#9aa0aa" stroke-width="0.55"/><path d="M171 381.50 H186.40" stroke="#9aa0aa" stroke-width="0.55"/><path d="M199 381.50 H210.20" stroke="#9aa0aa" stroke-width="0.55"/><path d="M226 381.50 H238.60" stroke="#9aa0aa" stroke-width="0.55"/><path d="M125 388.50 H154.40" stroke="#9aa0aa" stroke-width="0.55"/><path d="M171 388.50 H186.40" stroke="#9aa0aa" stroke-width="0.55"/><path d="M199 388.50 H221.00" stroke="#9aa0aa" stroke-width="0.55"/><path d="M199 390.10 H214.40" stroke="#9aa0aa" stroke-width="0.55"/><path d="M226 388.50 H238.60" stroke="#9aa0aa" stroke-width="0.55"/><path d="M125 395.50 H167.00" stroke="#9aa0aa" stroke-width="0.55"/><path d="M125 397.10 H154.40" stroke="#9aa0aa" stroke-width="0.55"/><path d="M171 395.50 H193.00" stroke="#9aa0aa" stroke-width="0.55"/><path d="M171 397.10 H186.40" stroke="#9aa0aa" stroke-width="0.55"/><path d="M199 395.50 H210.20" stroke="#9aa0aa" stroke-width="0.55"/><path d="M226 395.50 H238.60" stroke="#9aa0aa" stroke-width="0.55"/><path d="M125 404.00 H167.00" stroke="#9aa0aa" stroke-width="0.55"/><path d="M125 405.60 H167.00" stroke="#9aa0aa" stroke-width="0.55"/><path d="M125 407.20 H167.00" stroke="#9aa0aa" stroke-width="0.55"/><path d="M125 408.80 H154.40" stroke="#9aa0aa" stroke-width="0.55"/><path d="M171 404.00 H186.40" stroke="#9aa0aa" stroke-width="0.55"/><path d="M199 404.00 H210.20" stroke="#9aa0aa" stroke-width="0.55"/><path d="M226 404.00 H238.60" stroke="#9aa0aa" stroke-width="0.55"/><path d="M125 417.50 H167.00" stroke="#9aa0aa" stroke-width="0.55"/><path d="M125 419.10 H167.00" stroke="#9aa0aa" stroke-width="0.55"/><path d="M125 420.70 H167.00" stroke="#9aa0aa" stroke-width="0.55"/><path d="M125 422.30 H167.00" stroke="#9aa0aa" stroke-width="0.55"/><path d="M125 423.90 H154.40" stroke="#9aa0aa" stroke-width="0.55"/><path d="M171 417.50 H193.00" stroke="#9aa0aa" stroke-width="0.55"/><path d="M171 419.10 H186.40" stroke="#9aa0aa" stroke-width="0.55"/><path d="M199 417.50 H210.20" stroke="#9aa0aa" stroke-width="0.55"/><path d="M226 417.50 H238.60" stroke="#9aa0aa" stroke-width="0.55"/></svg>
<svg class="a" style="left:0px;top:0px;" width="300" height="720" viewBox="0 0 300 720"><rect x="109.7" y="453" width="145.3" height="82" fill="#fff" stroke="#c8c8c8" stroke-width="1"/><rect x="115.5" y="455.3" width="136.7" height="16.7" fill="#5b9bd5"/><rect x="115.5" y="472" width="136.7" height="18" fill="#d0d8e8"/><rect x="115.5" y="490" width="136.7" height="19.399999999999977" fill="#e9edf4"/><rect x="115.5" y="509.4" width="136.7" height="22.300000000000068" fill="#d0d8e8"/><rect x="115.5" y="455.3" width="7.5" height="76.40000000000003" fill="#5b9bd5"/><path d="M170.3 455.3 V531.7" stroke="#fff" stroke-width="0.5"/><path d="M197.2 455.3 V531.7" stroke="#fff" stroke-width="0.5"/><path d="M225 455.3 V531.7" stroke="#fff" stroke-width="0.5"/><path d="M115.5 472 H252.2" stroke="#fff" stroke-width="0.4"/><path d="M115.5 490 H252.2" stroke="#fff" stroke-width="0.4"/><path d="M115.5 509.4 H252.2" stroke="#fff" stroke-width="0.4"/><path d="M126 458.00 H166.00" stroke="#e8f0fa" stroke-width="0.8"/><path d="M126 460.20 H166.00" stroke="#e8f0fa" stroke-width="0.8"/><path d="M126 462.40 H154.00" stroke="#e8f0fa" stroke-width="0.8"/><path d="M172 458.00 H194.00" stroke="#e8f0fa" stroke-width="0.8"/><path d="M172 460.00 H187.40" stroke="#e8f0fa" stroke-width="0.8"/><path d="M199 458.00 H211.60" stroke="#e8f0fa" stroke-width="0.8"/><path d="M227 458.00 H239.60" stroke="#e8f0fa" stroke-width="0.8"/><path d="M126 475.00 H168.00" stroke="#9aa0aa" stroke-width="0.55"/><path d="M126 477.20 H168.00" stroke="#9aa0aa" stroke-width="0.55"/><path d="M126 479.40 H168.00" stroke="#9aa0aa" stroke-width="0.55"/><path d="M126 481.60 H155.40" stroke="#9aa0aa" stroke-width="0.55"/><path d="M172 475.00 H180.40" stroke="#9aa0aa" stroke-width="0.55"/><path d="M199 475.00 H214.40" stroke="#9aa0aa" stroke-width="0.55"/><path d="M227 475.00 H239.60" stroke="#9aa0aa" stroke-width="0.55"/><path d="M126 493.00 H168.00" stroke="#9aa0aa" stroke-width="0.55"/><path d="M126 495.20 H168.00" stroke="#9aa0aa" stroke-width="0.55"/><path d="M126 497.40 H155.40" stroke="#9aa0aa" stroke-width="0.55"/><path d="M172 493.00 H194.00" stroke="#9aa0aa" stroke-width="0.55"/><path d="M172 494.60 H187.40" stroke="#9aa0aa" stroke-width="0.55"/><path d="M199 493.00 H211.60" stroke="#9aa0aa" stroke-width="0.55"/><path d="M227 493.00 H239.60" stroke="#9aa0aa" stroke-width="0.55"/><path d="M126 512.00 H168.00" stroke="#9aa0aa" stroke-width="0.55"/><path d="M126 514.20 H168.00" stroke="#9aa0aa" stroke-width="0.55"/><path d="M126 516.40 H168.00" stroke="#9aa0aa" stroke-width="0.55"/><path d="M126 518.60 H155.40" stroke="#9aa0aa" stroke-width="0.55"/><path d="M172 512.00 H194.00" stroke="#9aa0aa" stroke-width="0.55"/><path d="M172 513.60 H187.40" stroke="#9aa0aa" stroke-width="0.55"/><path d="M199 512.00 H207.40" stroke="#9aa0aa" stroke-width="0.55"/><path d="M227 512.00 H239.60" stroke="#9aa0aa" stroke-width="0.55"/></svg>
<svg class="a" style="left:253px;top:491px;" width="11" height="15" viewBox="0 0 11 15"><path d="M0.5 1 V12.5 L3.2 10.2 L5 13.8 L6.4 13.1 L4.8 9.6 L8.4 9.4 Z" fill="#fff" stroke="#505050" stroke-width="0.8"/></svg>
<div class="a" style="left:276.3px;top:236px;width:1004px;height:441px;background:#ffffff;"></div>
<div class="a" style="left:278px;top:264.9px;width:26.30000000000001px;height:36.3px;background:#5b9bd5;"></div>
<div class="a" style="left:305.7px;top:264.9px;width:360.59999999999997px;height:36.3px;background:#5b9bd5;"></div>
<div class="a" style="left:667.7px;top:264.9px;width:211.5999999999999px;height:36.3px;background:#5b9bd5;"></div>
<div class="a" style="left:880.7px;top:264.9px;width:211.5999999999999px;height:36.3px;background:#5b9bd5;"></div>
<div class="a" style="left:1093.7px;top:264.9px;width:196.29999999999995px;height:36.3px;background:#5b9bd5;"></div>
<div class="a" style="left:278px;top:304.5px;width:26.30000000000001px;height:65.5px;background:#5b9bd5;"></div>
<div class="a" style="left:305.7px;top:304.5px;width:360.59999999999997px;height:65.5px;background:#d3dcee;"></div>
<div class="a" style="left:667.7px;top:304.5px;width:211.5999999999999px;height:65.5px;background:#d3dcee;"></div>
<div class="a" style="left:880.7px;top:304.5px;width:211.5999999999999px;height:65.5px;background:#d3dcee;"></div>
<div class="a" style="left:1093.7px;top:304.5px;width:196.29999999999995px;height:65.5px;background:#d3dcee;"></div>
<div class="a" style="left:278px;top:371.5px;width:26.30000000000001px;height:154.0px;background:#5b9bd5;"></div>
<div class="a" style="left:305.7px;top:371.5px;width:360.59999999999997px;height:154.0px;background:#eaedf6;"></div>
<div class="a" style="left:667.7px;top:371.5px;width:211.5999999999999px;height:154.0px;background:#eaedf6;"></div>
<div class="a" style="left:880.7px;top:371.5px;width:211.5999999999999px;height:154.0px;background:#eaedf6;"></div>
<div class="a" style="left:1093.7px;top:371.5px;width:196.29999999999995px;height:154.0px;background:#eaedf6;"></div>
<div class="a" style="left:278px;top:527px;width:26.30000000000001px;height:100.2px;background:#5b9bd5;"></div>
<div class="a" style="left:305.7px;top:527px;width:360.59999999999997px;height:100.2px;background:#d3dcee;"></div>
<div class="a" style="left:667.7px;top:527px;width:211.5999999999999px;height:100.2px;background:#d3dcee;"></div>
<div class="a" style="left:880.7px;top:527px;width:211.5999999999999px;height:100.2px;background:#d3dcee;"></div>
<div class="a" style="left:1093.7px;top:527px;width:196.29999999999995px;height:100.2px;background:#d3dcee;"></div>
<div class="a" style="left:278px;top:628.6px;width:26.30000000000001px;height:61.4px;background:#5b9bd5;"></div>
<div class="a" style="left:305.7px;top:628.6px;width:360.59999999999997px;height:61.4px;background:#eaedf6;"></div>
<div class="a" style="left:667.7px;top:628.6px;width:211.5999999999999px;height:61.4px;background:#eaedf6;"></div>
<div class="a" style="left:880.7px;top:628.6px;width:211.5999999999999px;height:61.4px;background:#eaedf6;"></div>
<div class="a" style="left:1093.7px;top:628.6px;width:196.29999999999995px;height:61.4px;background:#eaedf6;"></div>
<div class="c hd" style="left:310.3px;top:265.2px">Іс-шараның атауы</div>
<div class="c hd" style="left:672px;top:265.2px">Аяқтау нысаны</div>
<div class="c hd" style="left:885px;top:265.2px">Орындау мерзімі</div>
<div class="c hd" style="left:1097.5px;top:265.2px">Жауапты тұлғалар</div>
<div class="c" style="left:310.3px;top:303.6px">ҚР-ның 2022 -2026 жылдарға арналған сыбайлас<br>жемқорлыққа қарсы стратегиясы-<br>Тұжырымдамасын түсіндіру</div>
<div class="c" style="left:672px;top:303.6px">Университет сайтында,<br>әлеуметтік желілерде ақпарат</div>
<div class="c" style="left:885px;top:303.6px">Тұрақты түрде</div>
<div class="c" style="left:1097.5px;top:303.6px">Комплаенс-офицер</div>
<div class="c" style="left:310.3px;top:372.4px"><span class="j">Университет ПОҚ қызметкерлерін 100% қамти отыра</span><span class="j">«С.Аманжолов атындағы ШҚУ» КЕАҚ-нің сыбайлас</span><span class="j">жемқорлыққа қарсы саясат саласындағы өзекті</span>нормативтік құжаттарымен таныстыру.<br>(Сыбайлас жемқорлыққа қарсы саясат,<span class="j">оқытушы мен қызметкердің Ар-намыс кодексі, мүдделер</span><span class="j">қақтығысын шешу ережелері, сыйлықтар және өкілдік</span>шығыстар)</div>
<div class="c" style="left:672px;top:372.4px">Университет сайтында,<br>әлеуметтік желілерде ақпарат</div>
<div class="c" style="left:885px;top:372.4px">Ай сайын</div>
<div class="c" style="left:1097.5px;top:372.4px">Комплаенс-офицер</div>
<div class="c" style="left:310.3px;top:527.3px">«С.Аманжолов атындағы ШҚУ» КЕАҚ қызметкерлеріне<br>сыбайлас жемқорлыққа қарсы іс-қимыл заңнамасының<br>талаптарын түсіндіру жұмыстарын жүргізуге арналған<br>оқыту семинарларын ұйымдастыру</div>
<div class="c" style="left:672px;top:527.3px">Анықтама, университет<br>сайтында, әлеуметтік желілерде<br>ақпарат</div>
<div class="c" style="left:885px;top:527.3px">Ай сайын</div>
<div class="c" style="left:1097.5px;top:527.3px">Комплаенс-офицер</div>
<div class="c" style="left:310.3px;top:628.9px">Университеттің ПОҚ мен білім алушылары арасында<br>сыбайлас жемқорлық, парасаттылық, академиялық<br>адалдық мәселелері бойынша анонимді сауалнамалар</div>
<div class="c" style="left:672px;top:628.9px">Анықтама</div>
<div class="c" style="left:885px;top:628.9px">Ақпан<br>Сәуір-Мамыр<br>Желтоқсан</div>
<div class="c" style="left:1097.5px;top:628.9px">Комплаенс-офицер</div>
<svg class="a" style="left:1097px;top:643px;" width="68" height="4" viewBox="0 0 68 4"><path d="M0 2 L1 0.5 L3 3 L5 0.5 L7 3 L9 0.5 L11 3 L13 0.5 L15 3 L17 0.5 L19 3 L21 0.5 L23 3 L25 0.5 L27 3 L29 0.5 L31 3 L33 0.5 L35 3 L37 0.5 L39 3 L41 0.5 L43 3 L45 0.5 L47 3 L49 0.5 L51 3 L53 0.5 L55 3 L57 0.5 L59 3 L61 0.5 L63 3 L65 0.5 " fill="none" stroke="#e05050" stroke-width="0.8"/></svg>
<svg class="a" style="left:928px;top:478px;" width="11" height="17" viewBox="0 0 11 17"><path d="M1.6 2 H9.6 M5.6 2 V15.6 M1.6 15.6 H9.6" fill="none" stroke="#4a4a4a" stroke-width="1.3"/></svg>
<div class="a" style="left:1270px;top:236px;width:10px;height:441px;background:#e8e8e8;"></div>
<div class="a" style="left:1271.5px;top:250.3px;width:8.5px;height:383px;background:#dadada;"></div>
<div class="a" style="left:1271.5px;top:299.2px;width:8.5px;height:69.3px;background:#ffffff;border:1px solid #cfcfcf;border-right:none"></div>
<div class="a" style="left:1271.5px;top:238.7px;width:8.5px;height:11.6px;background:#ffffff;border:1px solid #c6c6c6;border-right:none"></div>
<svg class="a" style="left:1273px;top:242px;" width="7" height="4" viewBox="0 0 7 4"><path d="M0.5 3.5 L3.5 0.5 L6.5 3.5 Z" fill="#606060"/></svg>
<div class="a" style="left:1271.5px;top:632.8px;width:8.5px;height:11.1px;background:#ffffff;border:1px solid #c6c6c6;border-right:none"></div>
<svg class="a" style="left:1273px;top:637px;" width="7" height="4" viewBox="0 0 7 4"><path d="M0.5 0.5 L3.5 3.5 L6.5 0.5 Z" fill="#606060"/></svg>
<svg class="a" style="left:1272px;top:649px;" width="8" height="8" viewBox="0 0 8 8"><path d="M1 7 H7 M1 5.5 L4 2.5 L7 5.5 Z M1 3 L4 0.3 L7 3" fill="#606060" stroke="#606060" stroke-width="0.6"/></svg>
<svg class="a" style="left:1272px;top:664px;" width="8" height="8" viewBox="0 0 8 8"><path d="M1 0.8 H7 M1 2.3 L4 5.3 L7 2.3 Z M1 4.8 L4 7.5 L7 4.8" fill="#606060" stroke="#606060" stroke-width="0.6"/></svg>
<div class="a" style="left:276.3px;top:676.5px;width:1004px;height:17.5px;background:#e8e8e8;"></div>
<div class="a" style="left:280px;top:678.6px;width:990px;height:11.6px;background:#dadada;"></div>
<div class="a" style="left:280px;top:678.6px;width:12.3px;height:11.6px;background:#ffffff;border:1px solid #c6c6c6"></div>
<svg class="a" style="left:283px;top:681px;" width="5" height="7" viewBox="0 0 5 7"><path d="M4 0.5 L0.8 3.5 L4 6.5 Z" fill="#606060"/></svg>
<div class="a" style="left:356.2px;top:678.6px;width:834.3px;height:11.6px;background:#ffffff;border:1px solid #cfcfcf"></div>
<div class="a" style="left:1255.5px;top:677.5px;width:12.8px;height:13px;background:#ffffff;border:1px solid #c6c6c6"></div>
<svg class="a" style="left:1259.5px;top:680.5px;" width="5" height="7" viewBox="0 0 5 7"><path d="M0.8 0.5 L4 3.5 L0.8 6.5 Z" fill="#606060"/></svg>
<div class="a" style="left:276.3px;top:694px;width:1004px;height:26px;background:#e8e8e8;"></div>
<div class="a" style="left:276.3px;top:694px;width:1004px;height:1px;background:#d2d2d2;"></div>
<div class="t" style="left:286.6px;top:703.26px;font-size:12.8px;color:#666;letter-spacing:-0.178px;-webkit-text-stroke:0.1px currentColor;">Заметки к слайду</div>
<svg class="a" style="left:8px;top:668px;" width="30" height="30" viewBox="0 0 30 30"><circle cx="15" cy="15" r="12.5" fill="#1f1f1f"/><g transform="rotate(-45 15 15)"><rect x="9.2" y="12.6" width="12.6" height="4.8" rx="2.4" fill="none" stroke="#4cc46a" stroke-width="1.4"/><path d="M18.5 12.8 V17.2" stroke="#4cc46a" stroke-width="1.2"/></g></svg></body></html>
